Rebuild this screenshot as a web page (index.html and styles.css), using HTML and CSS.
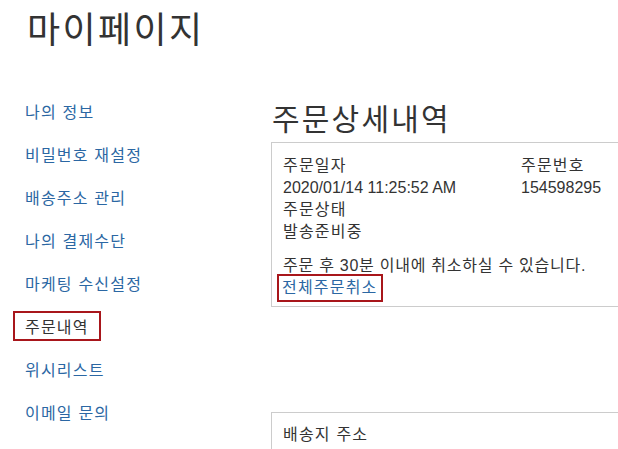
FILE: index.html
```html
<!DOCTYPE html>
<html lang="ko">
<head>
<meta charset="utf-8">
<title>마이페이지</title>
<link rel="stylesheet" href="styles.css">
</head>
<body>
<header class="page-head">
  <h1 class="page-title">마이페이지</h1>
</header>
<div class="layout">
  <nav class="side">
    <ul class="side-list">
      <li><a class="side-link" href="#">나의 정보</a></li>
      <li><a class="side-link" href="#">비밀번호 재설정</a></li>
      <li><a class="side-link" href="#">배송주소 관리</a></li>
      <li><a class="side-link" href="#">나의 결제수단</a></li>
      <li><a class="side-link" href="#">마케팅 수신설정</a></li>
      <li><a class="side-link is-active" href="#">주문내역</a></li>
      <li><a class="side-link" href="#">위시리스트</a></li>
      <li><a class="side-link" href="#">이메일 문의</a></li>
    </ul>
  </nav>
  <main class="content">
    <h2 class="section-title">주문상세내역</h2>
    <section class="card">
      <div class="info-grid">
        <div class="info-cell">
          <div class="label">주문일자</div>
          <div class="value">2020/01/14 11:25:52 AM</div>
        </div>
        <div class="info-cell">
          <div class="label">주문번호</div>
          <div class="value">154598295</div>
        </div>
        <div class="info-cell">
          <div class="label">주문상태</div>
          <div class="value value-ko">발송준비중</div>
        </div>
      </div>
      <p class="notice">주문 후 30분 이내에 취소하실 수 있습니다.</p>
      <div class="actions">
        <a class="cancel-link" href="#">전체주문취소</a>
      </div>
    </section>
    <section class="card card-address">
      <div class="label">배송지 주소</div>
    </section>
  </main>
</div>
</body>
</html>
```

FILE: styles.css
```css
html, body {
  margin: 0;
  padding: 0;
  background: #fff;
  overflow: hidden;
}

body {
  font-family: "Liberation Sans", "Noto Sans CJK KR", sans-serif;
  color: #333;
  font-size: 16px;
  width: 660px;
}

.page-head {
  padding: 7px 0 0 27px;
}

.page-title {
  margin: 0;
  font-family: "Noto Sans CJK KR", sans-serif;
  font-weight: 400;
  font-size: 36px;
  line-height: 40px;
  letter-spacing: 2.4px;
  color: #333;
}

.layout {
  display: grid;
  grid-template-columns: 271px 1fr;
}

.side {
  padding: 49px 0 0 13px;
}

.side-list {
  list-style: none;
  margin: 0;
  padding: 0;
  display: flex;
  flex-direction: column;
  gap: 13px;
}

.side-link {
  display: inline-block;
  font-family: "Noto Sans CJK KR", sans-serif;
  font-size: 16px;
  line-height: 22px;
  letter-spacing: 1.2px;
  padding: 2px 10px 2px 10px;
  border: 2px solid transparent;
  color: #2b67a3;
  text-decoration: none;
}

.side-link.is-active {
  color: #333;
  border-color: #a8161b;
}

.content {
  padding-top: 53px;
}

.section-title {
  margin: 0 0 8px 1px;
  font-family: "Noto Sans CJK KR", sans-serif;
  font-weight: 400;
  font-size: 30px;
  line-height: 34px;
  letter-spacing: 2.2px;
  color: #333;
}

.card {
  border: 1px solid #ccc;
  padding: 12px 11px 4px;
}

.info-grid {
  display: grid;
  grid-template-columns: 238px 1fr;
}

.label,
.value,
.notice {
  line-height: 22px;
  height: 22px;
}

.label,
.value-ko {
  letter-spacing: 1.2px;
}

.notice {
  margin: 12px 0 0;
  letter-spacing: 0.75px;
}

.actions {
  display: flex;
  margin-top: -3px;
}

.cancel-link {
  display: block;
  margin-left: -6px;
  padding: 0 3px;
  border: 2px solid #a8161b;
  line-height: 24px;
  letter-spacing: 1.2px;
  color: #2b67a3;
  text-decoration: none;
}

.card-address {
  margin-top: 105px;
  padding-top: 11px;
}
```
